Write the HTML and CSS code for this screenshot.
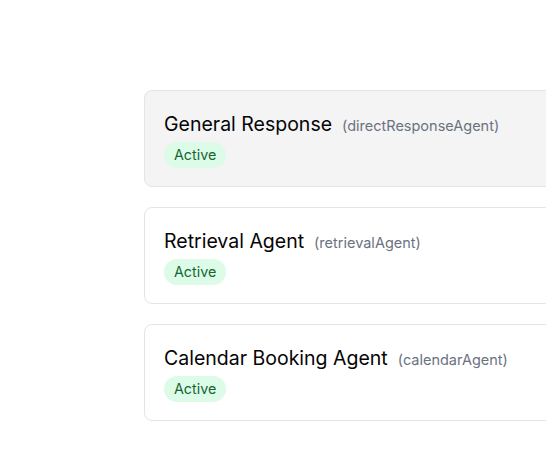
FILE: index.html
```html
<!DOCTYPE html>
<html lang="en">
<head>
<meta charset="utf-8">
<title>Agents</title>
<link rel="stylesheet" href="styles.css">
</head>
<body>
<main class="page">
  <div class="agent-list">
    <div class="agent-card is-hover">
      <div class="agent-title">
        <span class="agent-name">General Response</span>
        <span class="agent-id">(directResponseAgent)</span>
      </div>
      <span class="badge">Active</span>
    </div>
    <div class="agent-card">
      <div class="agent-title">
        <span class="agent-name">Retrieval Agent</span>
        <span class="agent-id">(retrievalAgent)</span>
      </div>
      <span class="badge">Active</span>
    </div>
    <div class="agent-card">
      <div class="agent-title">
        <span class="agent-name">Calendar Booking Agent</span>
        <span class="agent-id">(calendarAgent)</span>
      </div>
      <span class="badge">Active</span>
    </div>
  </div>
</main>
</body>
</html>
```
FILE: styles.css
```css
html, body {
  margin: 0;
  padding: 0;
  background: #ffffff;
  overflow: hidden;
  font-family: Inter, "Noto Sans", sans-serif;
  color: #111111;
}

.page {
  padding: 90px 0 0 144px;
  width: 700px;
}

.agent-list {
  display: flex;
  flex-direction: column;
  gap: 20px;
}

.agent-card {
  display: flex;
  flex-direction: column;
  align-items: flex-start;
  gap: 4px;
  padding: 19px 20px 18px 19px;
  border: 1px solid #e4e4e7;
  border-radius: 8px;
  background: #ffffff;
}

.agent-card.is-hover {
  background: #f4f4f5;
}

.agent-title {
  display: flex;
  align-items: baseline;
  gap: 10px;
  height: 28px;
  line-height: 28px;
}

.agent-name {
  font-size: 19.5px;
  font-weight: 400;
  color: #050505;
}

.agent-id {
  font-size: 14.5px;
  color: #6b7280;
}

.badge {
  display: inline-block;
  padding: 3px 10px;
  font-size: 14.3px;
  line-height: 20px;
  border-radius: 999px;
  background: #dcfce7;
  color: #166534;
}
```
